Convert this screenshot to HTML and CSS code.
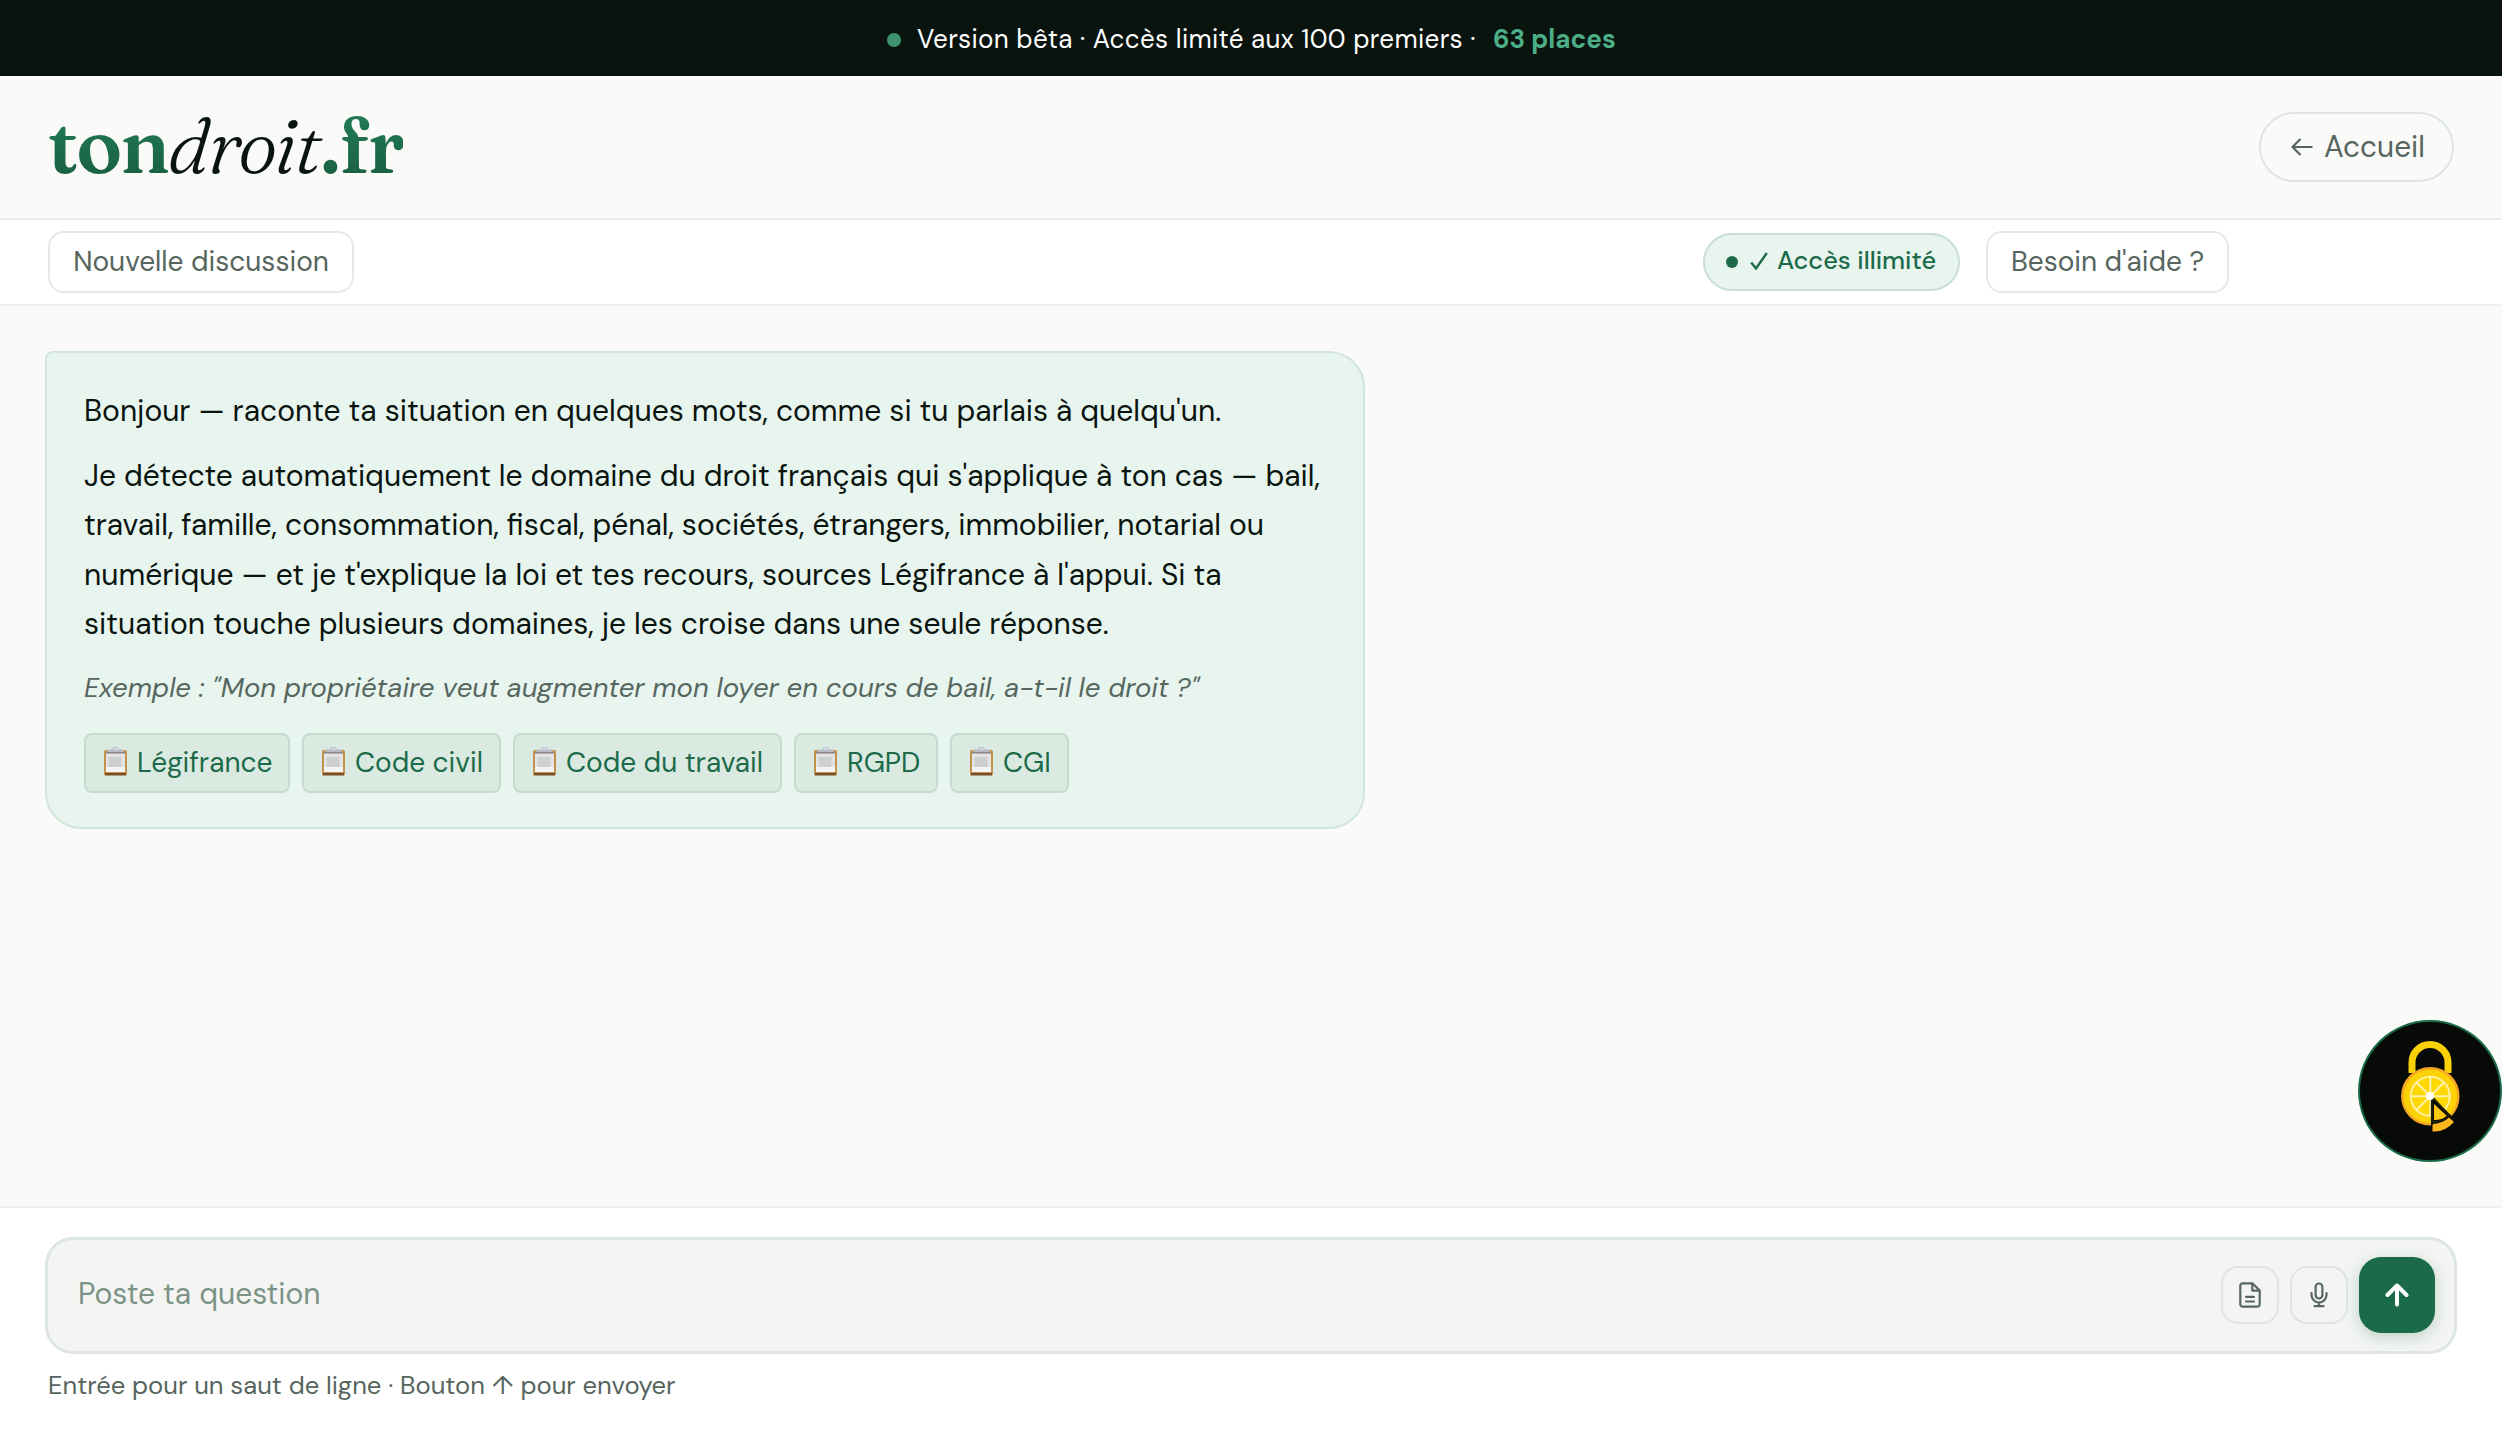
FILE: index.html
```html
<!DOCTYPE html>
<html lang="fr">
<head>
    <meta charset="UTF-8">
    <meta name="viewport" content="width=device-width, initial-scale=1.0">
    <title>tondroit.fr</title>
    <link rel="stylesheet" href="styles.css">
</head>
<body>
    <div class="beta-banner">
        <span class="beta-dot"></span>
        <span class="beta-text">Version bêta · Accès limité aux 100 premiers ·</span>
        <strong class="beta-places">63 places</strong>
    </div>

    <header class="header">
        <a class="logo" href="#"><b class="logo-green">ton</b><i class="logo-droit">droit</i><b class="logo-green">.fr</b></a>
        <a class="home-link" href="#">
            <svg class="home-arrow" viewBox="0 0 22 18"><path d="M9.5 1L1.5 9l8 8M1.5 9H21.5"/></svg>
            <span>Accueil</span>
        </a>
    </header>

    <nav class="toolbar">
        <button class="tool-btn">Nouvelle discussion</button>
        <div class="toolbar-right">
            <span class="access-pill">
                <span class="access-dot"></span>
                <svg class="access-check" viewBox="0 0 18 18"><path d="M1.2 10.5L6 16.5L16.8 1"/></svg>
                <span class="access-text">Accès illimité</span>
            </span>
            <button class="tool-btn tool-btn-help">Besoin d'aide ?</button>
        </div>
    </nav>

    <main class="chat">
        <div class="bubble">
            <p>Bonjour — raconte ta situation en quelques mots, comme si tu parlais à quelqu'un.</p>
            <p>Je détecte automatiquement le domaine du droit français qui s'applique à ton cas — bail,<br>
            travail, famille, consommation, fiscal, pénal, sociétés, étrangers, immobilier, notarial ou<br>
            numérique — et je t'explique la loi et tes recours, sources Légifrance à l'appui. Si ta<br>
            situation touche plusieurs domaines, je les croise dans une seule réponse.</p>
            <p class="example">Exemple : "Mon propriétaire veut augmenter mon loyer en cours de bail, a-t-il le droit ?"</p>
            <div class="sources">
                <span class="source source-legi"><svg class="clip"><use href="#clipboard"/></svg>Légifrance</span>
                <span class="source source-civil"><svg class="clip"><use href="#clipboard"/></svg>Code civil</span>
                <span class="source source-travail"><svg class="clip"><use href="#clipboard"/></svg>Code du travail</span>
                <span class="source source-rgpd"><svg class="clip"><use href="#clipboard"/></svg>RGPD</span>
                <span class="source source-cgi"><svg class="clip"><use href="#clipboard"/></svg>CGI</span>
            </div>
        </div>
    </main>

    <footer class="composer">
        <div class="input-box">
            <span class="placeholder">Poste ta question</span>
            <button class="icon-btn" aria-label="Document">
                <svg width="22" height="26" viewBox="0 0 22 26"><path d="M4 1.3h9.5l7.2 7.2V22a2.5 2.5 0 0 1-2.5 2.7H4A2.5 2.5 0 0 1 1.3 22V4A2.5 2.5 0 0 1 4 1.3zM13.3 1.3v7.4h7.4M7 14.8h8M7 19.5h8"/></svg>
            </button>
            <button class="icon-btn" aria-label="Micro">
                <svg width="18" height="26" viewBox="0 0 18 26"><rect x="5.6" y="1.5" width="6.8" height="15" rx="3.4"/><path d="M1.5 11v2a7.5 7.5 0 0 0 15 0v-2M9 20.5v3.7M4.5 24.2h9"/></svg>
            </button>
            <button class="send-btn" aria-label="Envoyer">
                <svg width="24" height="24" viewBox="0 0 24 24"><path d="M12 21.5v-19M2.5 12L12 2.5l9.5 9.5"/></svg>
            </button>
        </div>
        <p class="hint">Entrée pour un saut de ligne · Bouton ↑ pour envoyer</p>
    </footer>

    <button class="cookie-btn" aria-label="Cookies">
        <svg width="140" height="140" viewBox="2 2 140 140">
            <path d="M54 54V43.500a18 18 0 0 1 36 0V54" fill="none" stroke="#fbd108" stroke-width="7"/>
            <circle cx="72.3" cy="77.3" r="28" fill="#fcd207" stroke="#f5a623" stroke-width="2.5"/>
            <circle cx="72.3" cy="77.3" r="19.5" fill="#ffd800" stroke="#fff0a0" stroke-width="2"/>
            <path d="M72.3 57.5V97M52.5 77.3H92M58.500 63.500L86 91M86 63.500L58.500 91" stroke="#fff3b0" stroke-width="2"/>
            <path d="M73 77v32h18l9-6z" fill="#080a07"/>
            <path d="M76 85v16q9 0 13-4z" fill="#fcc810"/>
            <path d="M74.500 105v7.500q12 1 21.500-9.500l-5-4.500q-7 6.500-16.500 6.500z" fill="#fbb81c"/>
            <path d="M74 78v28M74 78l18 19.500M75 103q9 0 15-6" fill="none" stroke="#1d1c05" stroke-width="2.2"/>
            <circle cx="72" cy="77" r="4" fill="#fff"/>
        </svg>
    </button>

    <svg class="sprite">
        <symbol id="clipboard" viewBox="0 0 25 29">
            <rect x="1" y="3" width="23" height="25.5" rx="1.5" fill="#c3924f"/>
            <path d="M2 26h21v2.3H2z" fill="#76502a"/>
            <path d="M3 5h19v20H3z" fill="#e3e2e4"/>
            <path d="M3 20h19v5H3z" fill="#f5f5f6"/>
            <path d="M5.5 10h13v10h-13z" fill="#cecfd0"/>
            <path d="M3 5h19v1.5H3z" fill="#8c8480"/>
            <path d="M5 2.5h15l1 2.5H4z" fill="#b8bcc2"/>
            <path d="M9.5 3a3 3 0 0 1 6 0" fill="#d2dce8" stroke="#a6b8c9" stroke-width=".8"/>
        </symbol>
    </svg>
</body>
</html>
```
FILE: styles.css
```css
* {
    box-sizing: border-box;
}

body {
    margin: 0;
    height: 1442px;
    display: flex;
    flex-direction: column;
    overflow: hidden;
    background: #fafaf8;
    color: #0a140f;
    font-family: "DM Sans", Inter, sans-serif;
}

a {
    color: inherit;
    text-decoration: none;
}

button {
    margin: 0;
    padding: 0;
    font-family: inherit;
    cursor: pointer;
}

svg {
    display: block;
    flex: none;
}

/* Beta banner */
.beta-banner {
    height: 76px;
    flex: none;
    display: flex;
    align-items: center;
    padding: 2px 0 0 887px;
    background: #0a140f;
    color: #fff;
    font-size: 26px;
    white-space: nowrap;
}

.beta-dot {
    width: 14px;
    height: 14px;
    margin: 2px 16px 0 0;
    border-radius: 50%;
    background: #3f9270;
}

.beta-text {
    width: 576px;
    letter-spacing: 0.34px;
}

.beta-places {
    color: #4caf87;
    font-weight: 700;
}

/* Header */
.header {
    height: 144px;
    flex: none;
    display: flex;
    align-items: center;
    justify-content: space-between;
    padding: 0 48px;
    border-bottom: 2px solid #e8eeeb;
    background: #fafaf8;
}

.logo {
    display: flex;
    margin-bottom: 2px;
    font-family: Fraunces, "Liberation Serif", serif;
    font-size: 77px;
    line-height: 96px;
    letter-spacing: -1.9px;
}

.logo-green {
    background: linear-gradient(#217a55 20%, #1a5f43 85%);
    -webkit-background-clip: text;
    background-clip: text;
    color: transparent;
    font-weight: 600;
}

.logo-droit {
    font-weight: 350;
}

.home-link {
    width: 195px;
    height: 70px;
    display: flex;
    align-items: center;
    gap: 11px;
    padding: 0 0 1px 30px;
    border: 2px solid #dde6e1;
    border-radius: 35px;
    color: #56655e;
    font-size: 29.8px;
}

.home-arrow {
    width: 22px;
    height: 18px;
    fill: none;
    stroke: #56655e;
    stroke-width: 2.2;
}

/* Toolbar */
.toolbar {
    height: 86px;
    flex: none;
    display: flex;
    align-items: center;
    justify-content: space-between;
    padding: 0 273px 0 48px;
    border-bottom: 2px solid #edf2f0;
    background: #fff;
}

.toolbar-right {
    display: flex;
    align-items: center;
    gap: 26px;
}

.tool-btn {
    width: 306px;
    height: 62px;
    padding-bottom: 2px;
    border: 2px solid #e3ebe7;
    border-radius: 16px;
    background: #fff;
    color: #56655e;
    font-size: 28px;
}

.tool-btn-help {
    width: 243px;
}

.access-pill {
    width: 257px;
    height: 58px;
    display: flex;
    align-items: center;
    padding-left: 21px;
    border: 2px solid #c9dfd4;
    border-radius: 29px;
    background: #e8f4ee;
    color: #1b6b4a;
    font-size: 25.4px;
    font-weight: 500;
    white-space: nowrap;
}

.access-dot {
    width: 12px;
    height: 12px;
    margin-right: 12px;
    border-radius: 50%;
    background: #1b6b4a;
}

.access-check {
    width: 18px;
    height: 18px;
    margin: 0 9px 2px 0;
    fill: none;
    stroke: #1b6b4a;
    stroke-width: 2.4;
}

.access-text {
    padding-bottom: 3px;
}

/* Conversation */
.chat {
    flex: 1;
    padding: 45px;
}

.bubble {
    width: 1320px;
    height: 478px;
    padding: 33px 36px 33px 37px;
    border: 2px solid #d1e6db;
    border-radius: 8px 36px 36px 36px;
    background: #e8f4ee;
    font-size: 30px;
    line-height: 49.5px;
    white-space: nowrap;
}

.bubble p {
    margin: 0 0 15px;
}

.bubble .example {
    margin-bottom: 20px;
    color: #56675f;
    font-size: 27.5px;
    font-style: italic;
}

.sources {
    display: flex;
    gap: 12px;
}

.source {
    height: 60px;
    display: flex;
    align-items: center;
    gap: 9px;
    padding-left: 17px;
    border: 2px solid #c5dbd0;
    border-radius: 8px;
    background: #dbeae1;
    color: #1b6b4a;
    font-size: 28px;
}

.source-legi {
    width: 206px;
}

.source-civil {
    width: 199px;
}

.source-travail {
    width: 269px;
}

.source-rgpd {
    width: 144px;
}

.source-cgi {
    width: 119px;
}

.clip {
    width: 25px;
    height: 29px;
    margin-top: -3px;
}

/* Composer */
.composer {
    height: 236px;
    flex: none;
    padding: 29px 45px 0;
    border-top: 2px solid #edf2f0;
    background: #fff;
}

.input-box {
    height: 117px;
    display: flex;
    align-items: center;
    padding: 0 19px 1px 30px;
    border: 3px solid #dde6e1;
    border-radius: 28px;
    background: #f4f5f3;
}

.placeholder {
    flex: 1;
    padding-bottom: 3px;
    color: #7c9387;
    font-size: 30px;
}

.icon-btn {
    width: 58px;
    height: 58px;
    display: flex;
    align-items: center;
    justify-content: center;
    margin-right: 11px;
    border: 2px solid #dde6e1;
    border-radius: 17px;
    background: #f4f5f3;
}

.icon-btn svg {
    fill: none;
    stroke: #56675f;
    stroke-width: 2.2;
    stroke-linecap: round;
    stroke-linejoin: round;
}

.send-btn {
    width: 76px;
    height: 76px;
    display: flex;
    align-items: center;
    justify-content: center;
    border: 0;
    border-radius: 22px;
    background: #1b6b4a;
    box-shadow: 0 4px 16px rgba(27, 107, 74, 0.25);
}

.send-btn svg {
    fill: none;
    stroke: #fff;
    stroke-width: 4;
    stroke-linecap: round;
    stroke-linejoin: round;
}

.hint {
    margin: 15px 0 0 3px;
    color: #56655e;
    font-size: 25.6px;
    line-height: 34px;
}

/* Cookie consent button floating over the page */
.cookie-btn {
    position: absolute;
    right: 0;
    top: 1020px;
    width: 144px;
    height: 142px;
    display: flex;
    align-items: center;
    justify-content: center;
    border: 2px solid #1b6b4a;
    border-radius: 50%;
    background: #080a07;
    overflow: hidden;
}

.sprite {
    position: absolute;
    width: 0;
    height: 0;
}
```
